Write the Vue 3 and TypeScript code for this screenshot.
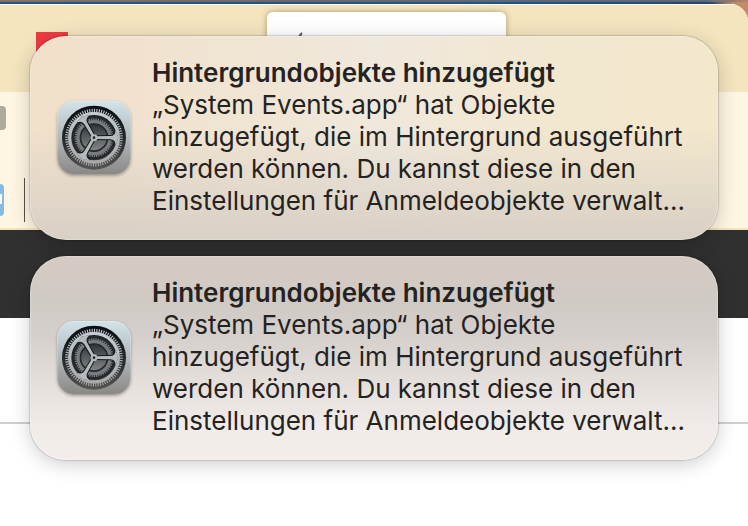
<script setup lang="ts">
interface Notice {
  id: string
  tone: 'warm' | 'cool'
  title: string
  lines: string[]
}

const title = 'Hintergrundobjekte hinzugefügt'
const lines = [
  '„System Events.app“ hat Objekte',
  'hinzugefügt, die im Hintergrund ausgeführt',
  'werden können. Du kannst diese in den',
  'Einstellungen für Anmeldeobjekte verwalt...',
]

const notices: Notice[] = [
  { id: 'first', tone: 'warm', title, lines },
  { id: 'second', tone: 'cool', title, lines },
]

const spokes = [0, 120, 240]
</script>

<template>
  <main class="desktop">
    <div class="window">
      <div class="tabs">
        <span class="marker"></span>
        <div class="field">
          <svg class="tip" viewBox="0 0 6 6" aria-hidden="true"><path d="M0 6C1 3 3 1 5 0V3L3 6Z" fill="#666" /></svg>
        </div>
      </div>
      <div class="toolbar">
        <span class="grey-chip"></span>
        <div class="tool-row">
          <span class="blue-chip"></span>
          <span class="separator"></span>
        </div>
      </div>
      <div class="band"></div>
      <div class="content"></div>
    </div>

    <section class="notices" aria-live="polite">
      <article v-for="notice in notices" :key="notice.id" class="notice" :class="notice.tone">
        <svg class="icon" viewBox="0 0 222 222" aria-hidden="true">
          <defs>
            <linearGradient :id="`plate-${notice.id}`" x1="0" y1="0" x2="0" y2="1">
              <stop offset="0" stop-color="#d3e3ea" />
              <stop offset=".5" stop-color="#b1b8bb" />
              <stop offset="1" stop-color="#898784" />
            </linearGradient>
            <linearGradient :id="`metal-${notice.id}`" gradientUnits="userSpaceOnUse" x1="0" y1="20" x2="0" y2="200">
              <stop offset="0" stop-color="#c6d0d5" />
              <stop offset="1" stop-color="#a5a6a5" />
            </linearGradient>
            <linearGradient :id="`well-${notice.id}`" x1="0" y1="0" x2="0" y2="1">
              <stop offset="0" stop-color="#0b0e10" />
              <stop offset=".6" stop-color="#2b2d2e" />
              <stop offset="1" stop-color="#555554" />
            </linearGradient>
            <linearGradient :id="`core-${notice.id}`" x1="0" y1="0" x2="0" y2="1">
              <stop offset="0" stop-color="#30353a" />
              <stop offset="1" stop-color="#858687" />
            </linearGradient>
          </defs>
          <rect width="222" height="222" rx="50" :fill="`url(#plate-${notice.id})`" />
          <rect x="1.5" y="1.5" width="219" height="219" rx="48" fill="none" stroke="#fff" stroke-opacity=".22" stroke-width="3" />
          <circle cx="111" cy="110" r="96" :fill="`url(#well-${notice.id})`" />
          <circle cx="111" cy="110" r="82" fill="none" :stroke="`url(#metal-${notice.id})`" stroke-width="9" pathLength="288" stroke-dasharray="1.8 2.2" />
          <circle cx="111" cy="110" r="66" fill="#25292c" />
          <circle cx="111" cy="110" r="55" fill="none" stroke="#85898c" stroke-width="6" pathLength="200" stroke-dasharray="2 2" />
          <circle cx="111" cy="110" r="48" fill="none" stroke="#777c80" stroke-width="10" />
          <circle cx="111" cy="110" r="40" :fill="`url(#core-${notice.id})`" stroke="#272b2e" stroke-width="4" />
          <circle cx="111" cy="110" r="73" fill="none" :stroke="`url(#metal-${notice.id})`" stroke-width="10" />
          <g v-for="angle in spokes" :key="angle" :transform="`rotate(${angle} 111 110)`">
            <path
              d="M116 103L158 102Q172 102 175 86L184 110L175 134Q172 118 158 118L116 117Z"
              fill="#15191c"
            />
          </g>
          <g :fill="`url(#metal-${notice.id})`">
            <path
              v-for="angle in spokes"
              :key="angle"
              :transform="`rotate(${angle} 111 110)`"
              d="M115 106L160 105Q175 105 176 86L184 110L176 134Q175 115 160 115L115 114Z"
            />
          </g>
          <circle cx="111" cy="110" r="10" :fill="`url(#metal-${notice.id})`" />
          <circle cx="111" cy="110" r="4" fill="#23282b" />
        </svg>
        <div class="copy">
          <h2>{{ notice.title }}</h2>
          <p>
            <span v-for="line in notice.lines" :key="line">{{ line }}</span>
          </p>
        </div>
      </article>
    </section>
  </main>
</template>

<style>
body {
  margin: 0;
  background: #fff;
}
</style>

<style scoped>
.desktop {
  position: relative;
  box-sizing: border-box;
  min-height: 100vh;
  padding-top: 4px;
  overflow: hidden;
  font-family: Inter, 'Liberation Sans', sans-serif;
  background:
    linear-gradient(90deg, #857365, #6b6865 40%, #5c6977 70%, #5c6977 94%, #b28468) top / 100% 2px no-repeat,
    linear-gradient(90deg, #24538a 0%, #1d5390 65%, #24476d 95%, #c58b68 98%);
}

.window {
  display: flex;
  flex-direction: column;
  min-height: calc(100vh - 4px);
  overflow: hidden;
  border-top-right-radius: 18px;
  background: #fff;
}

.tabs {
  display: grid;
  grid-template-columns: 36px 32px 199px 239fr 242fr;
  box-sizing: border-box;
  height: 88px;
  border-top: 1px solid #fffaf0;
  background: #f4e5bf;
}

.marker {
  grid-column: 2;
  height: 32px;
  margin-top: 27px;
  background: #ef3b43;
}

.field {
  grid-column: 4;
  height: 48px;
  margin-top: 7px;
  border-radius: 6px;
  background: linear-gradient(#fff 40%, #eee);
  box-shadow: 0 0 6px rgb(80 60 10 / 45%);
}

.tip {
  display: block;
  width: 5px;
  height: 5px;
  margin: 20px 0 0 31px;
}

.toolbar {
  display: flex;
  flex-direction: column;
  gap: 48px;
  box-sizing: border-box;
  height: 138px;
  padding-top: 14px;
  border-bottom: 2px solid #f4e2b7;
  background: #fef6e3;
}

.grey-chip {
  width: 6px;
  height: 24px;
  border-radius: 0 4px 4px 0;
  background: #aeaa9f;
}

.tool-row {
  display: flex;
  align-items: center;
  justify-content: flex-start;
  gap: 20px;
  height: 44px;
}

.blue-chip {
  box-sizing: border-box;
  width: 4px;
  height: 32px;
  border: solid #83bbe1;
  border-width: 10px 2px 12px 0;
  border-radius: 0 4px 4px 0;
  background: #fff;
}

.separator {
  width: 1px;
  height: 44px;
  background: #555149;
}

.band {
  height: 88px;
  background: #303030;
}

.content {
  flex: 1;
  background: linear-gradient(#d0d0d0, #d0d0d0) 0 104px / 100% 2px no-repeat;
}

.notices {
  position: absolute;
  inset: 36px 30px auto;
  display: grid;
  gap: 16px;
}

.notice {
  display: flex;
  align-items: center;
  gap: 21px;
  box-sizing: border-box;
  min-height: 204px;
  padding: 20px 27px;
  border-radius: 36px;
  color: #242321;
  box-shadow:
    0 0 1px 1px rgb(0 0 0 / 14%),
    0 4px 20px rgb(0 0 0 / 20%),
    inset 0 0 1px 1px rgb(255 255 255 / 25%);
}

.warm {
  background:
    linear-gradient(180deg, transparent 45%, #d8d0c6 100%),
    linear-gradient(90deg, #f1e0ca, #f0e5d4 34%, #efe8dc 50%, #f2e7d0 75%, #f3e7cc);
}

.cool {
  background: linear-gradient(#d5cbc2, #d0cac5 23%, #d5d0cc 40%, #e4dedb 60%, #f0ebe8 83%, #f4eeeb);
}

.icon {
  flex: none;
  width: 74px;
  height: 74px;
  border-radius: 17px;
  box-shadow: 0 1px 3px rgb(0 0 0 / 30%);
}

.copy {
  min-width: 0;
  padding-bottom: 2px;
  font-size: 26px;
  line-height: 32px;
  white-space: nowrap;
}

h2,
p {
  margin: 0;
  font-size: inherit;
}

h2 {
  font-weight: 600;
}

p span {
  display: block;
}
</style>
